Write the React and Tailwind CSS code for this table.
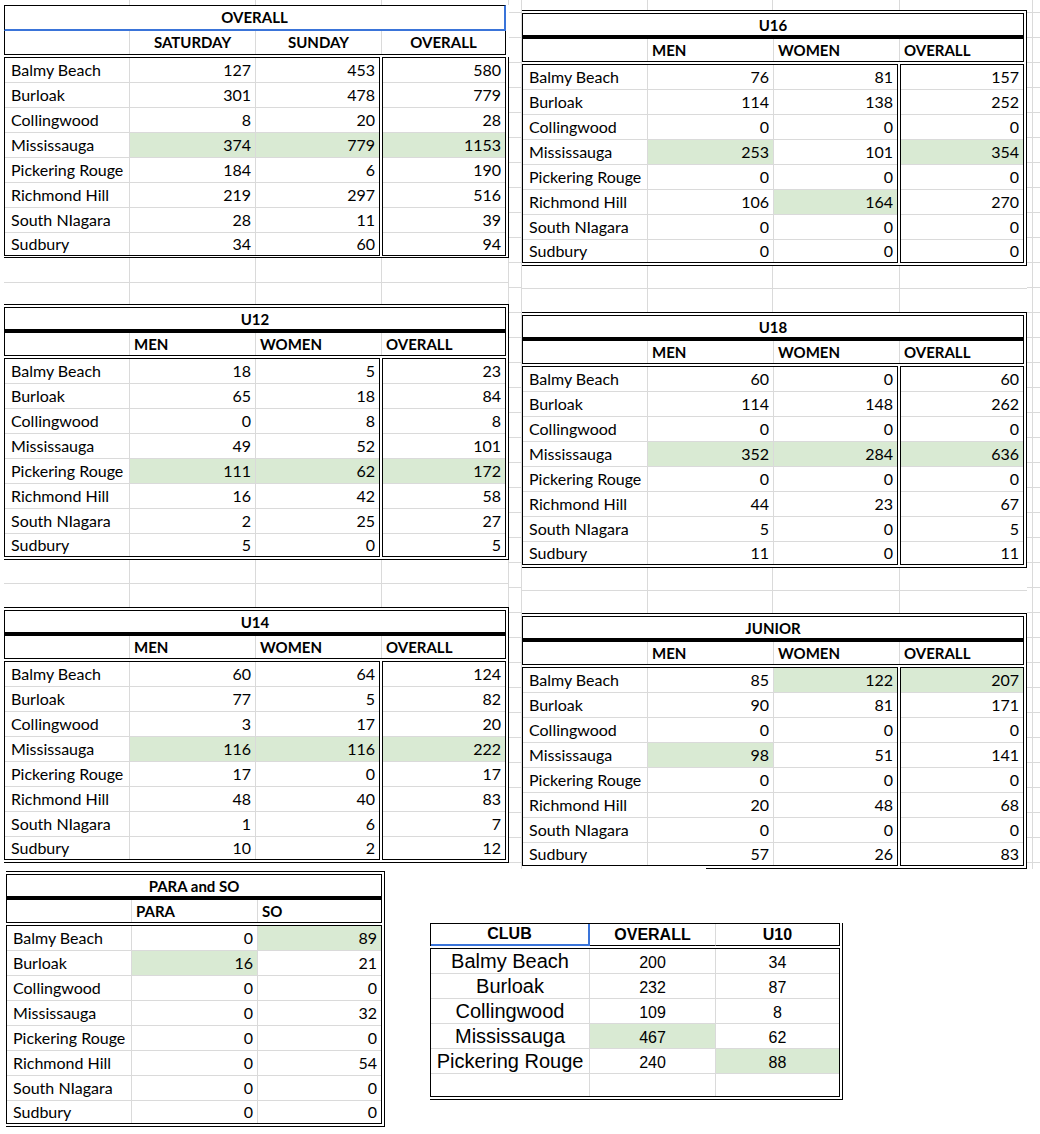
const NAMES = ['Balmy Beach', 'Burloak', 'Collingwood', 'Mississauga', 'Pickering Rouge', 'Richmond Hill', 'South NIagara', 'Sudbury']

// '*' marks a highlighted (green) cell
const OVERALL = [
  ['127', '453', '580'], ['301', '478', '779'], ['8', '20', '28'], ['374*', '779*', '1153*'],
  ['184', '6', '190'], ['219', '297', '516'], ['28', '11', '39'], ['34', '60', '94'],
]
const U16 = [
  ['76', '81', '157'], ['114', '138', '252'], ['0', '0', '0'], ['253*', '101', '354*'],
  ['0', '0', '0'], ['106', '164*', '270'], ['0', '0', '0'], ['0', '0', '0'],
]
const U12 = [
  ['18', '5', '23'], ['65', '18', '84'], ['0', '8', '8'], ['49', '52', '101'],
  ['111*', '62*', '172*'], ['16', '42', '58'], ['2', '25', '27'], ['5', '0', '5'],
]
const U18 = [
  ['60', '0', '60'], ['114', '148', '262'], ['0', '0', '0'], ['352*', '284*', '636*'],
  ['0', '0', '0'], ['44', '23', '67'], ['5', '0', '5'], ['11', '0', '11'],
]
const U14 = [
  ['60', '64', '124'], ['77', '5', '82'], ['3', '17', '20'], ['116*', '116*', '222*'],
  ['17', '0', '17'], ['48', '40', '83'], ['1', '6', '7'], ['10', '2', '12'],
]
const JUNIOR = [
  ['85', '122*', '207*'], ['90', '81', '171'], ['0', '0', '0'], ['98*', '51', '141'],
  ['0', '0', '0'], ['20', '48', '68'], ['0', '0', '0'], ['57', '26', '83'],
]
const PARA = [
  ['0', '89*'], ['16*', '21'], ['0', '0'], ['0', '32'], ['0', '0'], ['0', '54'], ['0', '0'], ['0', '0'],
]
const CLUB = [
  ['Balmy Beach', '200', '34'], ['Burloak', '232', '87'], ['Collingwood', '109', '8'],
  ['Mississauga', '467*', '62'], ['Pickering Rouge', '240', '88*'],
]

const MWO = ['MEN', 'WOMEN', 'OVERALL']
const TICKS = 'bg-[image:repeating-linear-gradient(180deg,transparent_0_12px,#dadada_12px_13px,transparent_13px_25px)]'

function Num({ v, className }) {
  const hi = v.endsWith('*')
  return (
    <div className={`flex items-center justify-end pr-[4px] ${hi ? 'bg-[#d9ead3]' : ''} ${className}`}>
      {hi ? v.slice(0, -1) : v}
    </div>
  )
}

function rowCls(i) {
  return i < 7 ? 'h-[25px] border-b border-[#dadada]' : 'h-[22px]'
}

function Body({ data, split }) {
  const n = data[0].length
  const leftN = split ? n - 1 : n
  return (
    <div className="flex gap-[2px] text-[16px]">
      <div className={`border border-black ${split ? 'w-[376px]' : 'flex-1'}`}>
        {data.map((r, i) => (
          <div key={i} className={`flex ${rowCls(i)}`}>
            <div className="w-[125px] border-r border-[#dadada] flex items-center pl-[6px] whitespace-nowrap">{NAMES[i]}</div>
            {r.slice(0, leftN).map((v, j) => (
              <Num key={j} v={v} className={j < leftN - 1 ? 'w-[126px] border-r border-[#dadada]' : 'flex-1'} />
            ))}
          </div>
        ))}
      </div>
      {split && (
        <div className="flex-1 border border-black">
          {data.map((r, i) => (
            <div key={i} className={`flex ${rowCls(i)}`}>
              <Num v={r[n - 1]} className="flex-1" />
            </div>
          ))}
        </div>
      )}
    </div>
  )
}

function Head({ heads, center, h }) {
  return (
    <div className={`flex ${h} border-x border-b border-black font-bold`}>
      <div className="w-[125px] border-r border-[#dadada]" />
      {heads.map((t, j) => (
        <div key={t} className={`flex items-center ${center ? 'justify-center' : 'pl-[4px]'} ${j < heads.length - 1 ? 'w-[126px] border-r border-[#dadada]' : 'flex-1'}`}>
          {t}
        </div>
      ))}
    </div>
  )
}

function Block({ title, heads, data, split = true, w = 'w-[505px]', cutBottom }) {
  return (
    <div className={w}>
      <div className={`border-t border-r border-black pt-[2px] pr-[2px] ${cutBottom ? 'pb-[2px]' : 'border-b pb-[2px]'}`}>
        <div className="h-[26px] border-x border-t border-b-4 border-black flex items-center justify-center font-bold pt-[1px]">{title}</div>
        <Head heads={heads} h="h-[23px]" />
        <div className="mt-[2px]">
          <Body data={data} split={split} />
        </div>
      </div>
      {cutBottom && <div className="ml-[184px] h-px bg-black" />}
    </div>
  )
}

function OverallBlock() {
  return (
    <div className="w-[505px]">
      <div className="w-[502px] h-[26px] border-t border-l border-t-black border-l-black border-r-2 border-b-2 border-r-[#3a74d9] border-b-[#3a74d9] flex items-center justify-center font-bold">
        OVERALL
      </div>
      <div className="w-[502px]">
        <Head heads={['SATURDAY', 'SUNDAY', 'OVERALL']} center h="h-[24px]" />
      </div>
      <div className="mt-[2px] border-r border-b border-black pr-[2px] pb-[1px]">
        <Body data={OVERALL} split />
      </div>
    </div>
  )
}

function Gap({ rows, cols }) {
  return rows.map((h, i) => (
    <div key={i} className={`flex ${h} ${i < rows.length - 1 ? 'border-b border-[#dadada]' : ''}`}>
      {cols.map((c, j) => <div key={j} className={`${c} border-[#dadada]`} />)}
    </div>
  ))
}

const LEFT_COLS = ['w-[126px] border-r', 'w-[126px] border-r', 'w-[126px] border-r', 'w-[127px] border-r']
const RIGHT_COLS = ['w-[126px] border-r', 'w-[125px] border-r', 'w-[127px] border-r', 'flex-1']

function Club() {
  return (
    <div className="w-[413px] border-r border-b border-black pr-[2px] pb-[2px] font-['Liberation_Sans',Arial,sans-serif]">
      <div className="flex h-[23px] border-t border-x border-black font-bold text-[16px]">
        <div className="w-[159px] border-r-2 border-b-2 border-[#3a74d9] flex items-center justify-center">CLUB</div>
        <div className="w-[126px] border-r border-b border-r-[#dadada] border-b-black flex items-center justify-center">OVERALL</div>
        <div className="flex-1 border-b border-black flex items-center justify-center">U10</div>
      </div>
      <div className="mt-[2px] border border-black">
        {CLUB.map((r, i) => (
          <div key={i} className="flex h-[25px] border-b border-[#dadada]">
            <div className="w-[159px] border-r border-[#dadada] flex items-center justify-center text-[20px] whitespace-nowrap">{r[0]}</div>
            {r.slice(1).map((v, j) => {
              const hi = v.endsWith('*')
              return (
                <div key={j} className={`flex items-center justify-center pt-[4px] text-[16px] ${hi ? 'bg-[#d9ead3]' : ''} ${j === 0 ? 'w-[126px] border-r border-[#dadada]' : 'flex-1'}`}>
                  {hi ? v.slice(0, -1) : v}
                </div>
              )
            })}
          </div>
        ))}
        <div className="flex h-[22px]">
          <div className="w-[159px] border-r border-[#dadada]" />
          <div className="w-[126px] border-r border-[#dadada]" />
          <div className="flex-1" />
        </div>
      </div>
    </div>
  )
}

export default function App() {
  return (
    <div className="w-[1040px] h-[1134px] bg-white overflow-hidden text-black text-[15px] leading-none font-['Lato',sans-serif]">
      <div className="flex">
        {/* left sheet */}
        <div className="w-[517px] flex">
          <div className="w-[509px] pl-[4px] flex flex-col">
            <Gap rows={['h-[5px]']} cols={LEFT_COLS} />
            <OverallBlock />
            <Gap rows={['h-[25px]', 'h-[21px]']} cols={LEFT_COLS} />
            <Block title="U12" heads={MWO} data={U12} />
            <Gap rows={['h-[24px]', 'h-[23px]']} cols={LEFT_COLS} />
            <Block title="U14" heads={MWO} data={U14} />
          </div>
          <div className={`w-[8px] ${TICKS}`} />
        </div>

        {/* right sheet */}
        <div className="flex-1 flex">
          <div className={`w-[5px] border-r border-[#dadada] ${TICKS}`} />
          <div className="w-[505px] flex flex-col">
            <Gap rows={['h-[10px]']} cols={RIGHT_COLS} />
            <Block title="U16" heads={MWO} data={U16} />
            <Gap rows={['h-[23px]', 'h-[23px]']} cols={RIGHT_COLS} />
            <Block title="U18" heads={MWO} data={U18} />
            <Gap rows={['h-[23px]', 'h-[22px]']} cols={RIGHT_COLS} />
            <Block title="JUNIOR" heads={MWO} data={JUNIOR} cutBottom />
          </div>
          <div className={`w-[6px] border-r border-[#dadada] ${TICKS}`} />
          <div className={`flex-1 ${TICKS}`} />
        </div>
      </div>

      <div className="flex items-start">
        <div className="ml-[6px] mt-[2px]">
          <Block title="PARA and SO" heads={['PARA', 'SO']} data={PARA} split={false} w="w-[379px]" />
        </div>
        <div className="ml-[45px] mt-[54px]">
          <Club />
        </div>
      </div>
    </div>
  )
}
